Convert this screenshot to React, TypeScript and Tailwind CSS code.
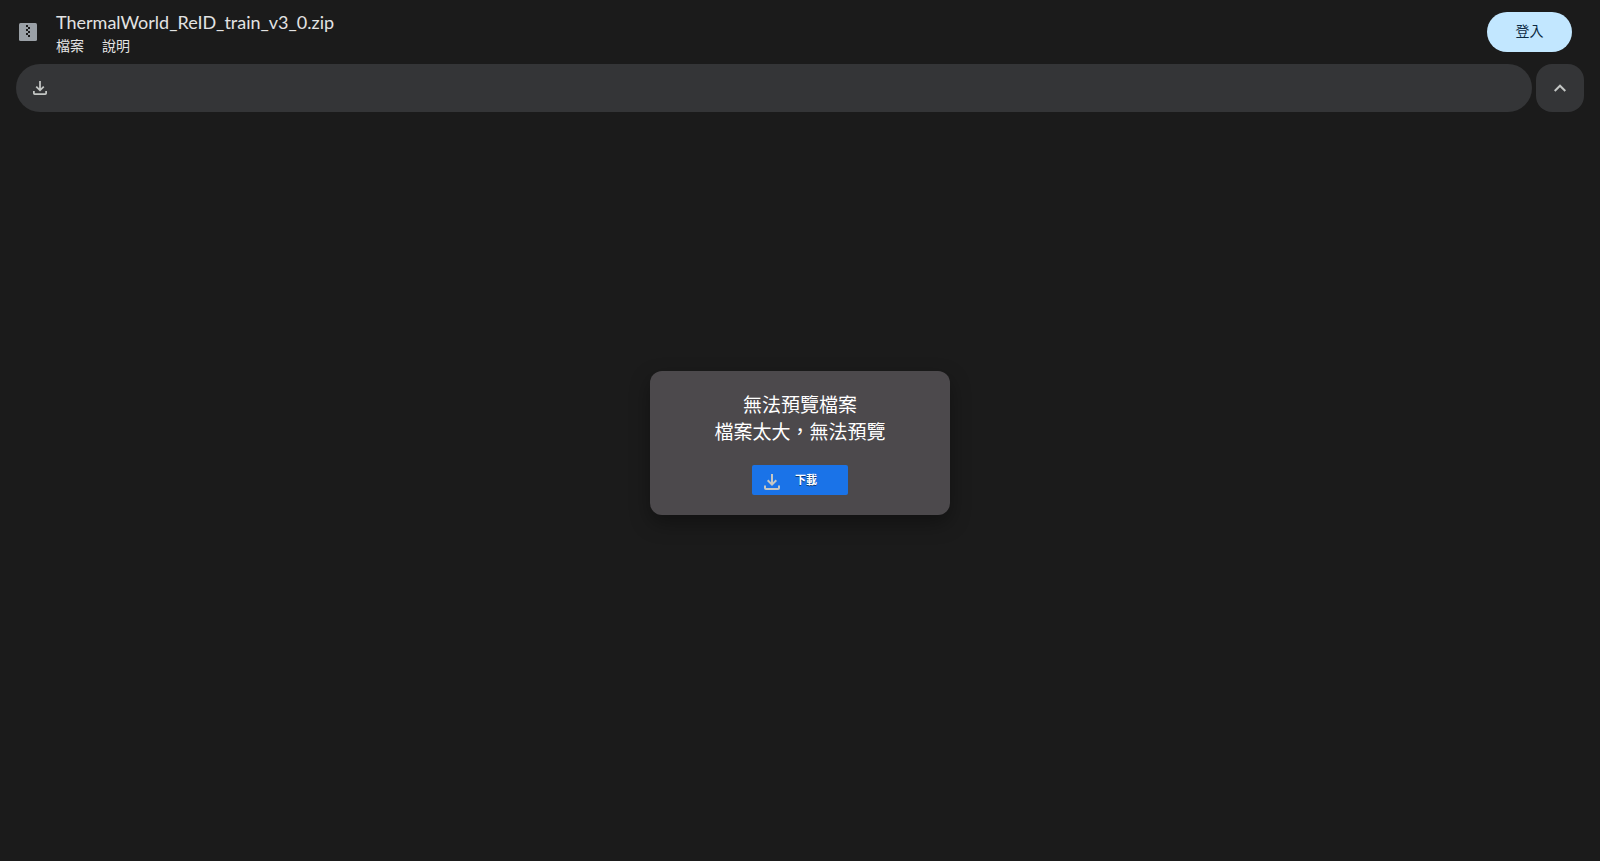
import React from "react";

function DownloadIcon({ className }: { className?: string }) {
  return (
    <svg viewBox="0 0 16 16" className={className} fill="none" stroke="currentColor" strokeWidth="2" aria-hidden="true">
      <path d="M8 0v10M3.7 6.3 8 10.6l4.3-4.3" />
      <path d="M1 11.5V14a1 1 0 0 0 1 1h12a1 1 0 0 0 1-1v-2.500" />
    </svg>
  );
}

function ZipIcon() {
  return (
    <svg viewBox="0 0 18 18" className="size-[18px]" role="img" aria-label="ZIP">
      <rect width="18" height="18" rx="1.5" fill="#9aa0a6" />
      <path fill="#1b1b1b" d="M7 2h2v2H7zM9 4h2v2H9zM7 6h2v2H7zM9 8h2v2H9zM7 10h2v2H7zM9 12h2v2H9z" />
    </svg>
  );
}

export default function App() {
  return (
    <div className="flex min-h-screen flex-col bg-[#1b1b1b] font-['Lato','Noto_Sans_CJK_TC',sans-serif] text-[#e3e3e3]">
      <header className="flex h-16 items-center justify-between pr-7 pl-[19px]">
        <div className="flex items-center gap-[19px]">
          <ZipIcon />
          <div className="pt-1">
            <h1 className="text-[18px] leading-6 text-[#e3e3e3]">ThermalWorld_ReID_train_v3_0.zip</h1>
            <nav className="flex h-6 gap-[18px] text-[14px] leading-6">
              <button type="button">檔案</button>
              <button type="button">說明</button>
            </nav>
          </div>
        </div>
        <a href="#" className="flex h-10 w-[85px] items-center justify-center rounded-full bg-[#c2e7ff] pb-1 text-[14px] text-[#0b2942]">
          登入
        </a>
      </header>

      <div className="flex gap-1 px-4">
        <div className="flex h-12 flex-1 items-center rounded-full bg-[#343537] px-[17px]" role="toolbar">
          <button type="button" aria-label="下載" className="text-[#c4c7c5]">
            <DownloadIcon className="size-[14px]" />
          </button>
        </div>
        <button type="button" aria-label="隱藏選單" className="flex size-12 items-center justify-center rounded-2xl bg-[#343537] text-[#c4c7c5]">
          <svg viewBox="0 0 12 8" className="h-2 w-3" fill="none" stroke="currentColor" strokeWidth="2" aria-hidden="true">
            <path d="M.7 7 6 1.700 11.300 7" />
          </svg>
        </button>
      </div>

      <main className="flex flex-1 items-center justify-center pb-[87px]">
        <section className="flex h-36 w-[300px] flex-col items-center rounded-xl bg-[#4c494c] pt-5 text-white shadow-[0_8px_20px_rgba(0,0,0,0.35)]">
          <p className="text-center text-[19px] leading-[27px]">
            無法預覽檔案
            <br />
            檔案太大，無法預覽
          </p>
          <button type="button" className="mt-5 flex h-[30px] w-24 items-center gap-[15px] rounded-xs bg-[#1a73e8] pl-3 text-[11px] font-bold [text-shadow:0_1px_0_rgba(0,0,0,0.5)]">
            <DownloadIcon className="mt-1 size-4 text-[#c4c7c5]" />
            下載
          </button>
        </section>
      </main>
    </div>
  );
}
